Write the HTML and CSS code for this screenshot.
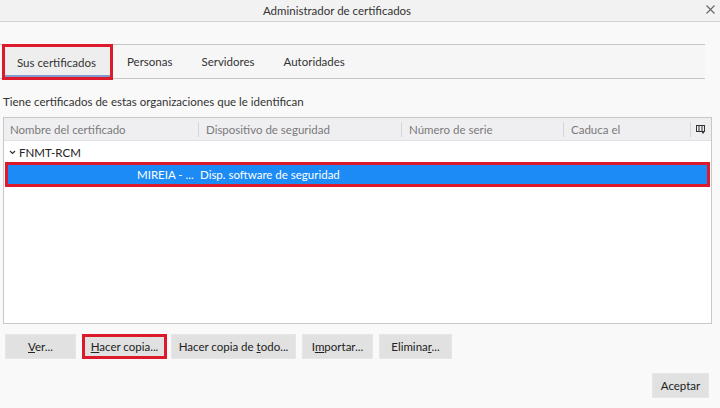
FILE: index.html
```html
<!DOCTYPE html>
<html lang="es">
  <head>
    <meta charset="UTF-8" />
    <title>Administrador de certificados</title>
    <link rel="stylesheet" href="styles.css">
  </head>
  <body>
    <div class="titlebar">
      <span class="title">Administrador de certificados</span>
      <svg class="close" width="9" height="9" viewBox="0 0 9 9">
        <path d="M0.5 0.5l8 8M8.5 0.5l-8 8" stroke="#666" stroke-width="1.1" />
      </svg>
    </div>
    <div class="content">
      <div class="tabs">
        <span class="tab active">Sus certificados</span>
        <span class="tab">Personas</span>
        <span class="tab">Servidores</span>
        <span class="tab">Autoridades</span>
      </div>
      <p class="desc">Tiene certificados de estas organizaciones que le identifican</p>
      <div class="tree">
        <div class="head">
          <span class="col c1">Nombre del certificado</span>
          <span class="col c2">Dispositivo de seguridad</span>
          <span class="col c3">Número de serie</span>
          <span class="col c4">Caduca el</span>
          <span class="picker">
            <svg width="9" height="9" viewBox="0 0 9 9">
              <rect x="0.5" y="0.5" width="8" height="6" fill="none" stroke="#333" />
              <path d="M3 1v5M6 1v5" stroke="#333" />
              <path d="M5 6h4l-2 3z" fill="#333" />
            </svg>
          </span>
        </div>
        <div class="group">
          <svg class="chev" width="7" height="5" viewBox="0 0 7 5">
            <path d="M1 1l2.5 2.5L6 1" fill="none" stroke="#333" stroke-width="1.2" />
          </svg>
          FNMT-RCM
        </div>
        <div class="row selected">
          <span class="name">MIREIA - ...</span>
          <span>Disp. software de seguridad</span>
        </div>
      </div>
      <div class="actions">
        <button class="btn w-ver"><u>V</u>er...</button>
        <button class="btn w-copia marked"><u>H</u>acer copia...</button>
        <button class="btn w-todo">Hacer copia de <u>t</u>odo...</button>
        <button class="btn w-imp">I<u>m</u>portar...</button>
        <button class="btn w-eli">Elimina<u>r</u>...</button>
      </div>
      <div class="footer">
        <button class="btn w-ok">Aceptar</button>
      </div>
    </div>
  </body>
</html>
```

FILE: styles.css
```css
* {
  margin: 0;
  padding: 0;
  box-sizing: border-box;
}
body {
  width: 720px;
  height: 408px;
  overflow: hidden;
  background: #f9f9f9;
  font-family: Lato, "Noto Sans", sans-serif;
  font-size: 11.5px;
  color: #222;
}
.titlebar {
  position: relative;
  height: 22px;
  background: #f2f2f2;
  border-bottom: 1px solid #d2d2d2;
  display: flex;
  align-items: center;
  justify-content: center;
  padding-right: 46px;
}
.titlebar .title {
  font-size: 11.5px;
  color: #333;
}
.titlebar .close {
  position: absolute;
  right: 5px;
  top: 5px;
}
.content {
  padding: 22px 0 0 0;
}
/* tabs */
.tabs {
  display: flex;
  width: 705px;
  height: 35px;
  border-top: 1px solid #c6c6c6;
  border-bottom: 1px solid #c6c6c6;
  background: #f6f6f6;
}
.tab {
  display: flex;
  align-items: center;
  padding: 0 14px;
  margin-right: 1px;
  white-space: nowrap;
  color: #333;
}
.tab.active {
  margin-left: 2px;
  margin-right: 0;
  padding: 0 0 0 12px;
  width: 111px;
  background: #eeeeee;
  border: 3px solid #dd1a2c;
  box-shadow: inset 0 -2px 0 #7f9bcf;
  margin-top: -1px;
  height: 36px;
}
.desc {
  margin: 16px 0 5px 3px;
  height: 17px;
  color: #333;
}
/* tree */
.tree {
  margin: 0 0 0 3px;
  width: 709px;
  height: 207px;
  background: #fff;
  border: 1px solid #c8c8c8;
}
.head {
  display: flex;
  height: 23px;
  align-items: center;
  background: #efeff1;
  border-bottom: 1px solid #e2e2e4;
  color: #7a7a7a;
}
.col {
  height: 15px;
  line-height: 15px;
  padding-left: 6px;
  white-space: nowrap;
  border-right: 1px solid #d6d6d6;
}
.c1 { width: 195px; }
.c2 { width: 203px; padding-left: 7px; }
.c3 { width: 162px; padding-left: 7px; }
.c4 { width: 127px; padding-left: 7px; }
.picker {
  display: flex;
  align-items: center;
  padding-left: 5px;
}
.group {
  display: flex;
  align-items: center;
  gap: 3px;
  height: 21px;
  padding: 2px 0 0 5px;
  color: #222;
}
.row {
  display: flex;
  align-items: center;
  height: 25px;
  margin: 0 1px 0 1px;
}
.row.selected {
  background: #1c8bf5;
  border: 3px solid #dd1a2c;
  color: #fff;
}
.row .name {
  width: 192px;
  padding-left: 129px;
  white-space: nowrap;
}
/* buttons */
.actions {
  display: flex;
  margin: 10px 0 0 5px;
  gap: 6px;
}
.btn {
  height: 25px;
  font-family: inherit;
  font-size: 11.5px;
  color: #222;
  background: #e1e1e1;
  border: 1px solid #e6e6e6;
  white-space: nowrap;
}
.btn u {
  text-decoration-thickness: 1px;
}
.btn.marked {
  border: 3px solid #dd1a2c;
}
.w-ver { width: 71px; }
.w-copia { width: 85px; }
.w-todo { width: 125px; margin-left: -2px; }
.w-imp { width: 71px; }
.w-eli { width: 73px; }
.footer {
  display: flex;
  justify-content: flex-end;
  padding: 14px 11px 0 0;
}
.w-ok { width: 57px; }
```
